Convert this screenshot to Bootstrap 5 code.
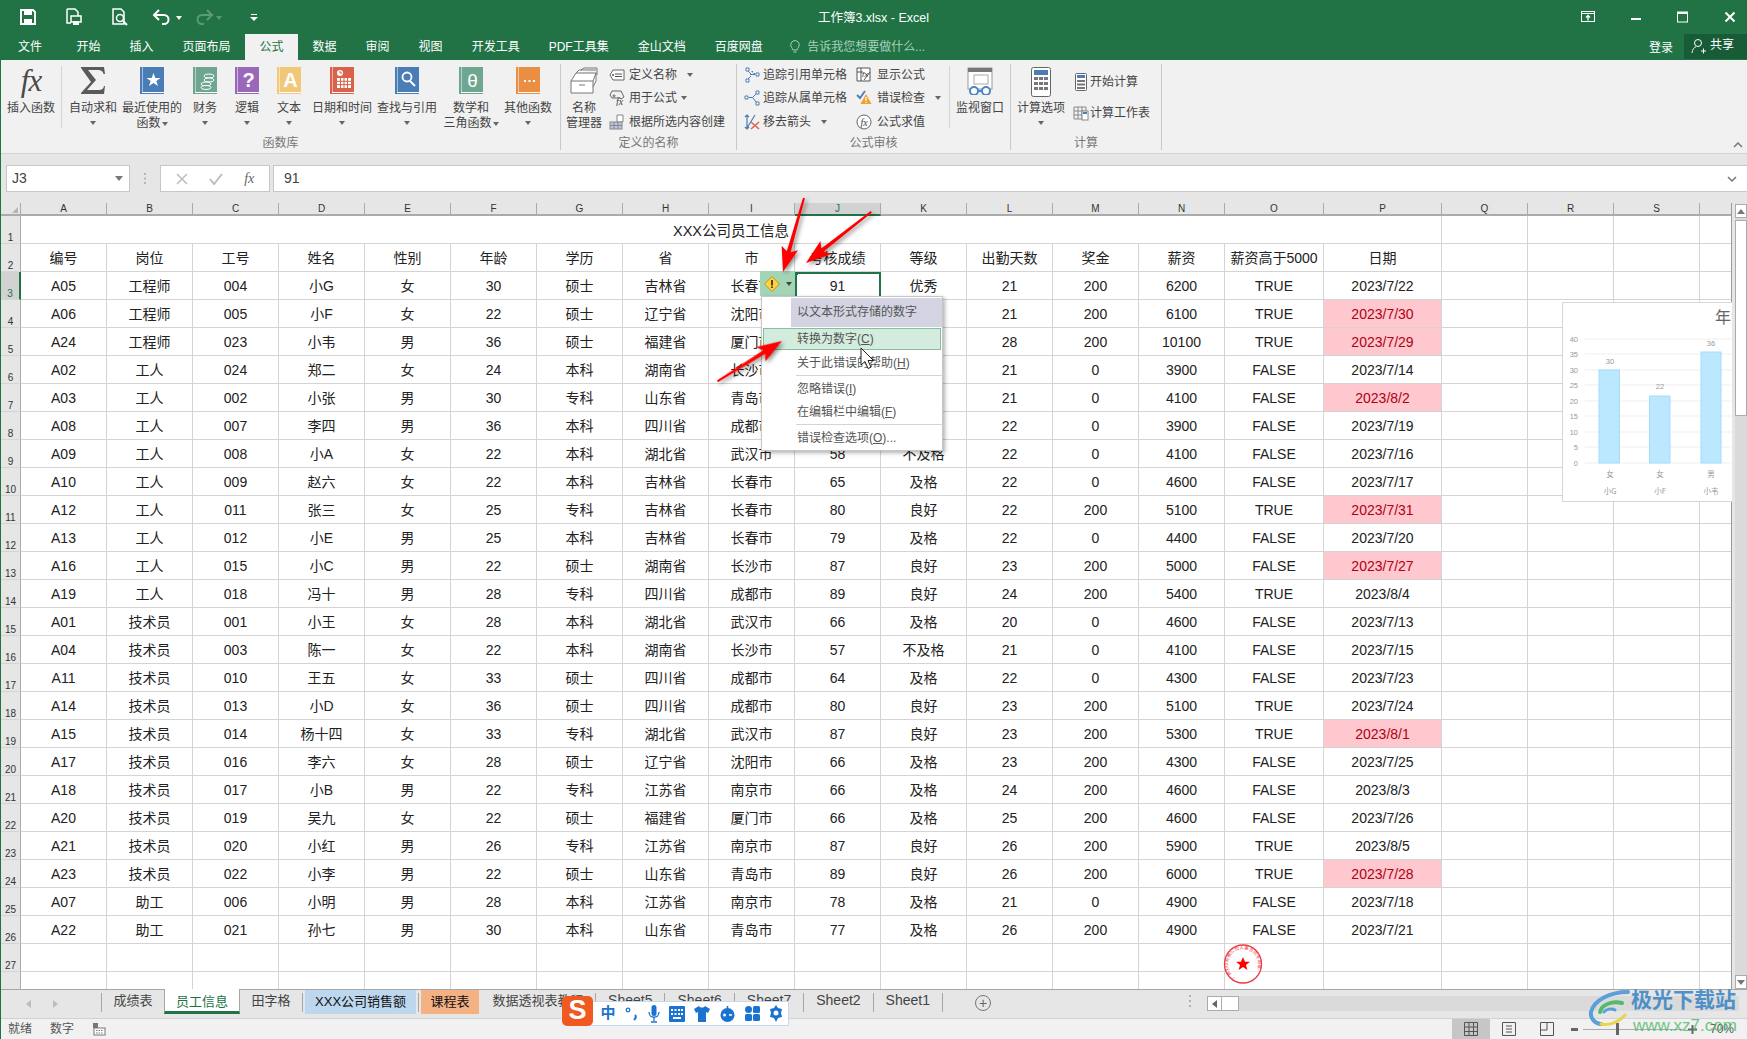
<!DOCTYPE html>
<html lang="zh-CN">
<head>
<meta charset="UTF-8">
<title>工作簿3.xlsx - Excel</title>
<link href="https://cdn.jsdelivr.net/npm/bootstrap@5.3.2/dist/css/bootstrap.min.css" rel="stylesheet">
<style>
    html, body { height: 100%; }
    body {
        width: 1747px; height: 1039px; overflow: hidden; position: relative;
        background: #e6e6e6; color: #444; border-left: 1px solid #217346;
        font-family: "Liberation Sans", "Noto Sans CJK SC", sans-serif; font-size: 12px;
    }
    svg { display: block; }

    /* title bar + tabs */
    .xl-green { background: #217346; color: #fff; margin-left: -1px; }
    .xl-title { height: 34px; position: relative; }
    .qa { width: 24px; height: 20px; }
    .qa-1 { margin-left: 16px; }
    .qa-gap { margin-left: 22px; }
    .qa-undo { margin-left: 19px; }
    .title-text { position: absolute; left: 0; right: 0; top: 9px; text-align: center; font-size: 12.5px; }
    .win-btns { margin-left: auto; gap: 35px; padding-right: 11px; }
    .xl-tabs { height: 26px; align-items: stretch; padding-left: 3px; }
    .xl-tabs .nav-link { color: #fff; padding: 6px 14.5px 0; font-size: 12px; line-height: 14px; }
    .xl-tabs .nav-link.first { padding: 6px 20px 0 15px; }
    .xl-tabs .nav-link.active { background: #f1f1f1; color: #217346; }
    .tell { color: #a9cfb9; gap: 7px; margin-left: 13px; padding-top: 6px; line-height: 14px; }
    .login { margin-left: auto; padding: 5px 11px 0 0; }
    .share { width: 63px; background: #185c37; gap: 3px; margin-bottom: 1px; padding-left: 7px; padding-top: 4px; line-height: 14px; }

    /* ribbon */
    .xl-ribbon { height: 94px; background: #f1f1f1; border-bottom: 1px solid #d2d2d2; padding-top: 4px; position: relative; }
    .rb-group { height: 86px; border-right: 1px solid #c9c9c9; position: relative; flex: none; }
    .rb-items { height: 72px; align-items: flex-start; }
    .rb-label { text-align: center; color: #777; line-height: 14px; height: 14px; }
    .rb-btn { display: flex; flex-direction: column; align-items: center; line-height: 15px; white-space: nowrap; color: #444; padding-top: 3px; }
    .rb-ic { height: 29px; margin-bottom: 5px; display: flex; align-items: flex-start; justify-content: center; }
    .rb-sep { width: 1px; height: 62px; background: #d5d5d5; margin-top: 2px; }
    .fx-big { font: italic 31px/28px "Liberation Serif", serif; color: #4a4a4a; letter-spacing: -1px; }
    .cr { display: inline-block; border: 3px solid transparent; border-top: 4px solid #666; border-bottom: 0; vertical-align: middle; margin-left: 1px; }
    .cr-only { display: block; margin: 5px auto 0; }
    .rb-small { display: flex; flex-direction: column; margin-top: -1px; }
    .rb-row { display: flex; align-items: center; height: 23.5px; white-space: nowrap; }
    .rb-row .ico { flex: none; display: flex; justify-content: center; }
    .cr-gap { margin-left: 10px; }
    .w-60 { width: 60px; } .w-58 { width: 58px; } .w-48 { width: 48px; } .w-36 { width: 36px; } .w-72 { width: 72px; } .w-56 { width: 56px; } .w-40 { width: 40px; }
    .ms-3px { margin-left: 3px; }
    .rb-collapse { position: absolute; right: 4px; bottom: 5px; }
    .grp-a { width: 560px; } .grp-b { width: 176px; } .grp-c { width: 274px; } .grp-d { width: 151px; }

    /* formula bar */
    .xl-fbar { height: 38px; padding-top: 11px; background: #e6e6e6; margin-right: 0; }
    .fb-box { height: 27px; background: #fff; border: 1px solid #c6c6c6; display: flex; align-items: center; }
    .fb-name { width: 124px; margin-left: 5px; padding: 0 6px 0 5px; justify-content: space-between; font-size: 14px; }
    .fb-dots { width: 30px; display: flex; align-items: center; justify-content: center; color: #aaa; }
    .fb-fx { width: 110px; justify-content: space-around; padding: 0 4px; color: #b9b9b9; }
    .fb-fx i { font: italic 14px "Liberation Serif", serif; color: #666; }
    .fb-in { margin-left: 3px; flex: 1; padding: 0 10px; font-size: 14px; justify-content: space-between; border-right: 0; }

    /* sheet */
    .xl-sheet-wrap { height: 797px; padding-top: 11px; overflow: hidden; position: relative; background: #e6e6e6; }
    .xl-grid { width: 1731px; overflow: hidden; height: 786px; border-right: 1px solid #9a9a9a; background: #fff; }
    table.xl-sheet { table-layout: fixed; border-collapse: separate; border-spacing: 0; width: 1730px; margin: 0; background: #fff; color: #222; font-size: 14px; }
    .xl-sheet th, .xl-sheet td { padding: 2px 0 0; text-align: center; vertical-align: middle; height: 28px; line-height: 25px; border: 0; border-right: 1px solid #d4d4d4; border-bottom: 1px solid #d4d4d4; white-space: nowrap; overflow: hidden; font-weight: 400; }
    .xl-sheet thead th { padding: 0; height: 13px; line-height: 11px; font-size: 10px; background: #e6e6e6; color: #333; border-right: 1px solid #ababab; border-bottom: 2px solid #ababab; }
    .xl-sheet thead th.cur { background: #d2d2d2; border-bottom: 2px solid #217346; color: #217346; }
    .xl-sheet th.rh { padding: 0; background: #e6e6e6; font-size: 10px; line-height: 10px; vertical-align: bottom; color: #333; border-right: 1px solid #ababab; border-bottom: 1px solid #d4d4d4; }
    .xl-sheet th.rh.cur { background: #d2d2d2; border-right: 2px solid #217346; color: #217346; }
    .xl-sheet td.hot { background: #ffc7ce; color: #b00012; }
    .xl-sheet td.sel { outline: 2px solid #217346; outline-offset: -2px; background: linear-gradient(135deg, #217346 4px, transparent 4px); }
    .xl-sheet td.ttl { font-size: 14.5px; padding-top: 4px; line-height: 23px; }
    .corner { border-left: 6px solid transparent; border-bottom: 6px solid #b5b5b5; width: 0; height: 0; margin: 2px 2px 0 auto; }
    .vbar { position: absolute; left: 1734px; top: 12px; width: 12px; height: 785px; background: #dadada; }
    .vbar .up, .vbar .dn { height: 14px; background: #fff; border: 1px solid #ababab; display: flex; justify-content: center; align-items: center; }
    .vbar .dn { position: absolute; left: 0; right: 0; bottom: 0; }
    .vbar .th { height: 196px; background: #fff; border: 1px solid #ababab; margin-top: 2px; }
    .tri-up { border: 4px solid transparent; border-bottom: 5px solid #777; border-top: 0; }
    .tri-dn { border: 4px solid transparent; border-top: 5px solid #777; border-bottom: 0; }

    /* sheet tabs */
    .xl-tabbar { height: 29px; background: #e6e6e6; border-top: 1px solid #a6a6a6; }
    .tb-nav { width: 100px; color: #bbb; padding-left: 25px; gap: 22px; }
    .tb { height: 24px; line-height: 23px; padding: 0 11.5px; font-size: 13px; color: #444; position: relative; white-space: nowrap; margin-top: -1px; }
    .tb-sep { border-left: 1px solid #a6a6a6; height: 19px; margin-top: 3px; }
    .tb.on { background: #fff; color: #217346; border-left: 1px solid #a6a6a6; border-right: 1px solid #a6a6a6; border-bottom: 3px solid #217346; padding: 1px 11px 0; height: 25px; }
    .tb.blue { background: #bdd7ee; color: #111; padding: 0 10px; margin: 0 2px; }
    .tb.orange { background: #f4b183; color: #111; padding: 0 9.5px; margin: 0 2px; }
    .tb.sh { font-size: 14px; padding: 0 12px; }
    .tb-add { width: 16px; height: 16px; border: 1px solid #777; border-radius: 50%; color: #666; margin-left: 32px; margin-top: 5px; display: flex; align-items: center; justify-content: center; font-size: 14px; line-height: 1; }
    .tb-hs { margin-left: auto; margin-right: 8px; height: 15px; margin-top: 6px; width: 532px; background: #dadada; }
    .tb-hs .bt { width: 15px; background: #fff; border: 1px solid #ababab; color: #666; display: flex; align-items: center; justify-content: center; }
    .tb-hs .th { width: 17px; background: #fff; border: 1px solid #ababab; border-left: 0; }
    .tb-dots { color: #aaa; position: absolute; left: 1188px; top: 5px; }
    .tri-l { border: 4px solid transparent; border-right: 5px solid #bdbdbd; border-left: 0; }
    .bt .tri-l { border-right-color: #666; }

    /* status bar */
    .xl-status { height: 21px; background: #f1f1f1; border-top: 1px solid #d2d2d2; margin-right: 0; color: #555; }
    .st-txt { padding-left: 7px; gap: 18px; line-height: 20px; }
    .st-views { margin-left: auto; height: 20px; }
    .st-v { width: 38px; display: flex; align-items: center; justify-content: center; }
    .st-v.on { background: #c6c6c6; }
    .st-zoom { width: 181px; position: relative; padding-left: 5px; gap: 5px; }
    .st-track { width: 100px; height: 1px; background: #aaa; position: relative; }
    .st-knob { position: absolute; left: 33px; top: -6px; width: 3px; height: 12px; background: #666; }
    .st-pct { margin-left: auto; padding-right: 13px; }

    /* floating things */
    .float-chart { position: absolute; left: 1561px; top: 302px; width: 170px; height: 200px; background: #fff; border: 1px solid #d6d6d6; border-right: 0; overflow: hidden; }
    .smart-tag { position: absolute; left: 759px; top: 271px; width: 35px; height: 25px; background: #a2d5b6; display: flex; align-items: center; gap: 6px; padding-left: 4px; }
    .smart-menu { position: absolute; left: 760px; top: 296px; width: 182px; height: 155px; background: #fff; border: 1px solid #c6c6c6; border-radius: 0; padding: 0; box-shadow: 2px 2px 4px rgba(0,0,0,.3); display: block; font-size: 12px; min-width: 0; }
    .smart-menu .dropdown-header { margin: 1px 0 0 29px; height: 29px; background: #d3d3e2; padding: 0 6px; line-height: 29px; color: #555; font-size: 12px; }
    .smart-menu .dropdown-item { height: 22px; line-height: 21px; padding: 0 0 0 33px; color: #555; font-size: 12px; border: 1px solid transparent; margin: 0 1px; width: auto; }
    .smart-menu .dropdown-item.on { background: #d3ecdd; border-color: #86bf9f; margin-top: 1px; margin-bottom: 2px; }
    .smart-menu .dropdown-item.lower { margin-top: 1px; }
    .smart-menu u { text-underline-offset: 1px; }
    .smart-menu hr { margin: 1px 0 2px 34px; border-color: #d4d4d4; opacity: 1; }
    .ov-svg { position: absolute; left: 0; top: 0; width: 1747px; height: 1039px; pointer-events: none; z-index: 1050; }
    .arrows { filter: drop-shadow(2px 2px 2px rgba(0,0,0,.45)); }
    .ime { position: absolute; left: 573px; top: 1001px; width: 215px; height: 25px; background: #fff; border: 1px solid #c5d9f1; padding-left: 21px; display: flex; align-items: center; justify-content: space-around; color: #1a73d1; font-size: 15px; font-weight: 700; z-index: 1051; }
    .ime-logo { position: absolute; left: 561px; top: 996px; width: 31px; height: 30px; background: #f05a22; border-radius: 5px; color: #fff; font: 700 27px/28px "Liberation Sans", sans-serif; text-align: center; z-index: 1052; }
    .wm-a { position: absolute; left: 1630px; top: 984px; font: 700 21px/28px "Noto Sans CJK SC", sans-serif; color: #2f7fc4; opacity: .82; white-space: nowrap; }
    .wm-b { position: absolute; left: 1632px; top: 1016px; font: 400 17px/20px "Liberation Sans", sans-serif; color: #4fb96c; opacity: .8; white-space: nowrap; }
    .c-blue { color: #4a7db5; } .c-green { color: #6fa691; } .c-purple { color: #9a68b8; }
    .c-yellow { color: #f0c878; } .c-red { color: #d9634a; } .c-orange { color: #e88f44; }
    .ic-25 { width: 25px; } .ic-22 { width: 22px; } .ic-26 { width: 26px; } .ic-19 { width: 19px; }
    .ms-1px { margin-left: 1px; }
    .calc-row { height: 31px; }
    .calc-row:first-child { margin-top: 3px; }
    .tri-flip { transform: scaleX(-1); }
    .tri-sm { border-width: 3px; border-top-width: 4px; border-top-color: #444; }
</style>
</head>
<body>

<svg width="0" height="0" class="position-absolute">
    <symbol id="book" viewBox="0 0 24 28">
        <rect x="1" y="0" width="23" height="25" fill="currentColor"/>
        <rect x="0" y="0" width="2" height="27" fill="currentColor"/>
        <rect x="2" y="25" width="22" height="1" fill="#fff"/>
        <rect x="2" y="26" width="22" height="1" fill="currentColor"/>
        <rect x="2" y="0" width="1" height="25" fill="#fff" opacity=".5"/>
    </symbol>
</svg>

<div class="xl-green">
    <div class="xl-title d-flex align-items-center">
        <svg class="qa qa-1" viewBox="0 0 24 20"><path d="M5 3h12l2 2v12H5z" fill="none" stroke="#fff" stroke-width="2"/><rect x="8" y="3" width="8" height="5" fill="#fff"/><rect x="8" y="12" width="8" height="5" fill="#fff"/></svg>
        <svg class="qa qa-gap" viewBox="0 0 24 20"><path d="M5 2h8l3 3v4M5 2v14h4" fill="none" stroke="#fff" stroke-width="1.5"/><rect x="9" y="9" width="10" height="6" fill="none" stroke="#fff" stroke-width="1.5"/><rect x="11" y="14" width="6" height="4" fill="#fff"/></svg>
        <svg class="qa qa-gap" viewBox="0 0 24 20"><path d="M5 2h8l3 3v12H5z" fill="none" stroke="#fff" stroke-width="1.5"/><circle cx="12" cy="11" r="3.5" fill="none" stroke="#fff" stroke-width="1.5"/><path d="M15 14l4 4" stroke="#fff" stroke-width="2"/></svg>
        <svg class="qa qa-undo" viewBox="0 0 24 20"><path d="M8 3L3 8l5 5M3 8h10a4 4 0 0 1 0 9h-2" fill="none" stroke="#fff" stroke-width="2"/></svg>
        <svg width="8" height="20" viewBox="0 0 8 20"><path d="M1 9h6l-3 4z" fill="#fff"/></svg>
        <svg class="qa ms-2" viewBox="0 0 24 20"><path d="M16 3l5 5-5 5M21 8H11a4 4 0 0 0 0 9h2" fill="none" stroke="#5b9a78" stroke-width="2"/></svg>
        <svg width="8" height="20" viewBox="0 0 8 20"><path d="M1 9h6l-3 4z" fill="#5b9a78"/></svg>
        <svg class="ms-4" width="14" height="20" viewBox="0 0 14 20"><path d="M4 7h6v1H4zM3 10h8l-4 4z" fill="#fff"/></svg>
        <div class="title-text">工作簿3.xlsx - Excel</div>
        <div class="win-btns d-flex align-items-center">
            <svg width="14" height="12" viewBox="0 0 14 12"><rect x=".5" y=".5" width="13" height="10" fill="none" stroke="#fff"/><path d="M1 2.5h12" stroke="#fff"/><path d="M7 9.5V5M5 6.5L7 4.500l2 2" fill="none" stroke="#fff" stroke-width="1.3"/></svg>
            <svg width="12" height="12" viewBox="0 0 12 12"><path d="M1 8h10" stroke="#fff" stroke-width="2"/></svg>
            <svg width="12" height="12" viewBox="0 0 12 12"><rect x=".5" y="1" width="10" height="10" fill="none" stroke="#fff"/><path d="M1 2h10" stroke="#fff" stroke-width="2"/></svg>
            <svg width="12" height="12" viewBox="0 0 12 12"><path d="M1.500 1.500l9 9M10.500 1.500l-9 9" stroke="#fff" stroke-width="2"/></svg>
        </div>
    </div>
    <nav class="nav xl-tabs">
        <a class="nav-link first">文件</a>
        <a class="nav-link">开始</a>
        <a class="nav-link">插入</a>
        <a class="nav-link">页面布局</a>
        <a class="nav-link active">公式</a>
        <a class="nav-link">数据</a>
        <a class="nav-link">审阅</a>
        <a class="nav-link">视图</a>
        <a class="nav-link">开发工具</a>
        <a class="nav-link">PDF工具集</a>
        <a class="nav-link">金山文档</a>
        <a class="nav-link">百度网盘</a>
        <div class="tell d-flex">
            <svg width="10" height="14" viewBox="0 0 10 14"><path d="M3 10C2 7.500.8 7 .8 4.800a4.200 4.200 0 0 1 8.400 0C9.200 7 8 7.500 7 10zM3.500 12h3" fill="none" stroke="#a9cfb9"/></svg>
            <span>告诉我您想要做什么...</span>
        </div>
        <div class="login">登录</div>
        <div class="share d-flex">
            <svg width="16" height="16" viewBox="0 0 16 16"><circle cx="7" cy="5" r="3.500" fill="none" stroke="#fff"/><path d="M1 15c.5-4 2.500-6 4-6M10 13h5M12.500 10.500v5" fill="none" stroke="#fff"/></svg>
            <span>共享</span>
        </div>
    </nav>
</div>

<div class="xl-ribbon d-flex">
    <!-- 函数库 -->
    <div class="rb-group grp-a d-flex flex-column">
        <div class="rb-items d-flex">
            <div class="rb-btn w-60"><div class="rb-ic fx-big">fx</div>插入函数</div>
            <div class="rb-sep"></div>
            <div class="rb-btn w-60 ms-1px">
                <div class="rb-ic"><svg width="24" height="27" viewBox="0 0 24 27"><path d="M0 0h23l1 7h-1.500C22 4 20 3 17 3H7l8 10-9 10h12c3 0 4.500-1.500 5-4h1l-1 8H0v-1l10-11L0 1z" fill="#5a5a5a"/></svg></div>
                自动求和<span class="cr cr-only"></span>
            </div>
            <div class="rb-btn w-58">
                <div class="rb-ic"><svg class="c-blue" width="24" height="28"><use href="#book"/><polygon points="13.500,6 15.300,11 20.500,11 16.300,14 18,19 13.500,16 9,19 10.700,14 6.500,11 11.700,11" fill="#fff"/></svg></div>
                最近使用的<span>函数<span class="cr"></span></span>
            </div>
            <div class="rb-btn w-48">
                <div class="rb-ic"><svg class="c-green" width="24" height="28"><use href="#book"/><g fill="#6fa691" stroke="#fff"><ellipse cx="16" cy="9" rx="5" ry="2"/><ellipse cx="16" cy="13" rx="5" ry="2"/><ellipse cx="13" cy="17" rx="5" ry="2"/><ellipse cx="13" cy="20.500" rx="5" ry="2"/></g></svg></div>
                财务<span class="cr cr-only"></span>
            </div>
            <div class="rb-btn w-36">
                <div class="rb-ic"><svg class="c-purple" width="24" height="28"><use href="#book"/><text x="13.500" y="20" text-anchor="middle" font-size="20" font-weight="700" fill="#fff" font-family="Liberation Sans">?</text></svg></div>
                逻辑<span class="cr cr-only"></span>
            </div>
            <div class="rb-btn w-48">
                <div class="rb-ic"><svg class="c-yellow" width="24" height="28"><use href="#book"/><text x="13.500" y="20" text-anchor="middle" font-size="20" font-weight="700" fill="#fff" font-family="Liberation Sans">A</text></svg></div>
                文本<span class="cr cr-only"></span>
            </div>
            <div class="rb-btn w-58">
                <div class="rb-ic"><svg class="c-red" width="24" height="28"><use href="#book"/><circle cx="10" cy="6" r="3" fill="#fff"/><path d="M10 4v2h2" stroke="#d9634a" fill="none"/><path d="M7 11h14v10H7z" fill="#fff"/><path d="M7 14.300h14M7 17.600h14M10.500 11v10M14 11v10M17.500 11v10" stroke="#d9634a"/></svg></div>
                日期和时间<span class="cr cr-only"></span>
            </div>
            <div class="rb-btn w-72">
                <div class="rb-ic"><svg class="c-blue" width="24" height="28"><use href="#book"/><circle cx="12" cy="10" r="4.500" fill="none" stroke="#fff" stroke-width="1.800"/><path d="M15 14l5 5" stroke="#fff" stroke-width="2"/></svg></div>
                查找与引用<span class="cr cr-only"></span>
            </div>
            <div class="rb-btn w-56">
                <div class="rb-ic"><svg class="c-green" width="24" height="28"><use href="#book"/><text x="13.500" y="20" text-anchor="middle" font-size="19" fill="#fff" font-family="Liberation Sans">θ</text></svg></div>
                数学和<span>三角函数<span class="cr"></span></span>
            </div>
            <div class="rb-btn w-58">
                <div class="rb-ic"><svg class="c-orange" width="24" height="28"><use href="#book"/><path d="M8 13h2v2H8zM12.500 13h2v2h-2zM17 13h2v2h-2z" fill="#fff"/></svg></div>
                其他函数<span class="cr cr-only"></span>
            </div>
        </div>
        <div class="rb-label">函数库</div>
    </div>
    <!-- 定义的名称 -->
    <div class="rb-group grp-b d-flex flex-column">
        <div class="rb-items d-flex">
            <div class="rb-btn w-40 ms-3px">
                <div class="rb-ic"><svg width="28" height="28" viewBox="0 0 28 28" fill="none" stroke="#777"><path d="M1 14h22v12H1zM1 14l5-8h20l-3 8M6 6l3-3h17M26 6v8l-3 6M9 18h6" fill="#fff"/><path d="M11 3l3-2h13v7" /></svg></div>
                名称<span>管理器</span>
            </div>
            <div class="rb-small">
                <div class="rb-row"><span class="ico ic-25"><svg width="16" height="12" viewBox="0 0 16 12"><path d="M4 1h11v10H4L1 6z" fill="#fff" stroke="#666"/><path d="M6 5h7M6 7.500h7" stroke="#555"/><circle cx="4" cy="6" r="1" fill="#555"/></svg></span>定义名称<span class="cr cr-gap"></span></div>
                <div class="rb-row"><span class="ico ic-25"><svg width="16" height="16" viewBox="0 0 16 16" fill="none" stroke="#666"><path d="M3 1h9l3 6-3 2-1-1H3L1 5zM5 5a1 1 0 1 0 .1 0"/><text x="7" y="15" font-size="10" font-style="italic" fill="#444" stroke="none" font-family="Liberation Serif">fx</text></svg></span>用于公式<span class="cr ms-1"></span></div>
                <div class="rb-row"><span class="ico ic-25"><svg width="16" height="16" viewBox="0 0 16 16"><path d="M8 1h6v7H8z" fill="#fff" stroke="#888"/><rect x="1" y="8" width="12" height="7" fill="#b9c7db" stroke="#888"/><path d="M1 11.500h12M5 8v7M9 8v7" stroke="#888"/></svg></span>根据所选内容创建</div>
            </div>
        </div>
        <div class="rb-label">定义的名称</div>
    </div>
    <!-- 公式审核 -->
    <div class="rb-group grp-c d-flex flex-column">
        <div class="rb-items d-flex">
            <div class="rb-small ps-1">
                <div class="rb-row"><span class="ico ic-22"><svg width="16" height="16" viewBox="0 0 16 16"><path d="M2 1h3v3H2zM2 12h3v3H2zM12 6h3v3h-3z" fill="#fff" stroke="#4a7db5"/><path d="M4 4l3 3M4 12l3-3M6 7.500h5" stroke="#4a7db5"/><path d="M7 4h2v2h2v2" fill="#4a7db5"/></svg></span>追踪引用单元格</div>
                <div class="rb-row"><span class="ico ic-22"><svg width="16" height="16" viewBox="0 0 16 16"><path d="M1 6h3v3H1zM12 1h3v3h-3zM12 12h3v3h-3z" fill="#fff" stroke="#4a7db5"/><path d="M5 7.500h4M9 7l3-3M9 8l3 4" stroke="#4a7db5"/></svg></span>追踪从属单元格</div>
                <div class="rb-row"><span class="ico ic-22"><svg width="16" height="16" viewBox="0 0 16 16"><path d="M3 1v14M11 1L3 14M1 3l2-2 2 2M1 13l2 2 2-2" fill="none" stroke="#4a7db5" stroke-width="1.200"/><path d="M7 8l8 7M15 8l-8 7" stroke="#d9634a" stroke-width="1.500"/></svg></span>移去箭头<span class="cr cr-gap"></span></div>
            </div>
            <div class="rb-small ms-1">
                <div class="rb-row"><span class="ico ic-26"><svg width="16" height="16" viewBox="0 0 16 16" fill="none" stroke="#555"><path d="M1 1h13v13H1z" fill="#fff"/><path d="M1 5h6M5 1v13M8 13l6-8"/><text x="6" y="10" font-size="8" fill="#444" stroke="none" font-family="Liberation Sans" font-style="italic">fx</text></svg></span>显示公式</div>
                <div class="rb-row"><span class="ico ic-26"><svg width="16" height="16" viewBox="0 0 16 16"><path d="M1 5l3 3 5-7" fill="none" stroke="#4a7db5" stroke-width="1.800"/><path d="M10 4l5.500 10h-11z" fill="#f0a030"/><path d="M10 7v4M10 12v1" stroke="#fff" stroke-width="1.300"/></svg></span>错误检查<span class="cr cr-gap"></span></div>
                <div class="rb-row"><span class="ico ic-26"><svg width="16" height="16" viewBox="0 0 16 16"><circle cx="8" cy="8" r="7" fill="#fff" stroke="#666"/><text x="8" y="11.500" text-anchor="middle" font-size="10" font-style="italic" fill="#444" font-family="Liberation Serif">fx</text></svg></span>公式求值</div>
            </div>
            <div class="rb-sep ms-auto"></div>
            <div class="rb-btn w-60">
                <div class="rb-ic"><svg width="28" height="28" viewBox="0 0 28 28"><rect x="2" y="1" width="24" height="21" fill="#fff" stroke="#999"/><rect x="2" y="1" width="24" height="4" fill="#777"/><rect x="8" y="8" width="14" height="9" fill="none" stroke="#aaa"/><circle cx="8" cy="24" r="4" fill="#fff" stroke="#4a86c5" stroke-width="2"/><circle cx="20" cy="24" r="4" fill="#fff" stroke="#4a86c5" stroke-width="2"/><path d="M12 24h4" stroke="#4a86c5" stroke-width="2"/></svg></div>
                监视窗口
            </div>
        </div>
        <div class="rb-label">公式审核</div>
    </div>
    <!-- 计算 -->
    <div class="rb-group grp-d d-flex flex-column">
        <div class="rb-items d-flex">
            <div class="rb-btn w-60">
                <div class="rb-ic"><svg width="20" height="30" viewBox="0 0 20 30"><rect x=".5" y=".5" width="19" height="29" rx="2" fill="#fff" stroke="#666"/><rect x="3" y="3" width="14" height="5" fill="#4a7db5"/><g fill="#777"><path d="M3 10h4v3H3zM8 10h4v3H8zM13 10h4v3h-4zM3 15h4v3H3zM8 15h4v3H8zM13 15h4v3h-4zM3 20h4v3H3zM8 20h4v3H8zM13 20h4v3h-4z"/></g></svg></div>
                计算选项<span class="cr cr-only"></span>
            </div>
            <div class="rb-small">
                <div class="rb-row calc-row"><span class="ico ic-19"><svg width="12" height="18" viewBox="0 0 12 18"><rect x=".5" y=".5" width="11" height="17" rx="1" fill="#fff" stroke="#666"/><rect x="2" y="2" width="8" height="3" fill="#4a7db5"/><path d="M2 7h8v2H2zM2 10.500h8v2H2zM2 14h8v2H2z" fill="#777"/></svg></span>开始计算</div>
                <div class="rb-row calc-row"><span class="ico ic-19"><svg width="16" height="16" viewBox="0 0 16 16" fill="none" stroke="#888"><path d="M1 2h12v12H1zM1 6h12M1 10h12M5 2v12M9 2v12"/><rect x="9" y="6" width="6" height="9" fill="#fff"/><rect x="10" y="7" width="4" height="2" fill="#4a7db5" stroke="none"/></svg></span>计算工作表</div>
            </div>
        </div>
        <div class="rb-label">计算</div>
    </div>
    <svg class="rb-collapse" width="10" height="6" viewBox="0 0 10 6"><path d="M1 5l4-4 4 4" fill="none" stroke="#777" stroke-width="1.500"/></svg>
</div>

<div class="xl-fbar d-flex">
    <div class="fb-box fb-name"><span>J3</span><span class="tri-dn"></span></div>
    <div class="fb-dots">
        <svg width="3" height="11" viewBox="0 0 3 11"><path d="M0 0h2v2H0zM0 4.500h2v2H0zM0 9h2v2H0z" fill="#b5b5b5"/></svg>
    </div>
    <div class="fb-box fb-fx">
        <svg width="12" height="12" viewBox="0 0 12 12"><path d="M1 1l10 10M11 1L1 11" stroke="#bdbdbd" stroke-width="1.500"/></svg>
        <svg width="14" height="12" viewBox="0 0 14 12"><path d="M1 6l4 5 8-10" fill="none" stroke="#bdbdbd" stroke-width="2"/></svg>
        <i>fx</i>
    </div>
    <div class="fb-box fb-in">
        <span>91</span>
        <svg width="10" height="6" viewBox="0 0 10 6"><path d="M1 1l4 4 4-4" fill="none" stroke="#777" stroke-width="1.500"/></svg>
    </div>
</div>

<div class="xl-sheet-wrap">
    <div class="xl-grid">
        <table class="table xl-sheet" id="sheet"></table>
    </div>
    <div class="vbar">
        <div class="up"><span class="tri-up"></span></div>
        <div class="th"></div>
        <div class="dn"><span class="tri-dn"></span></div>
    </div>
</div>

<div class="xl-tabbar d-flex position-relative">
    <div class="tb-nav d-flex align-items-center">
        <span class="tri-l"></span><span class="tri-l tri-flip"></span>
    </div>
    <div class="tb-sep"></div>
    <div class="tb">成绩表</div>
    <div class="tb on">员工信息</div>
    <div class="tb">田字格</div>
    <div class="tb-sep"></div>
    <div class="tb blue">XXX公司销售额</div>
    <div class="tb-sep"></div>
    <div class="tb orange">课程表</div>
    <div class="tb">数据透视表教程</div>
    <div class="tb-sep"></div>
    <div class="tb sh">Sheet5</div>
    <div class="tb-sep"></div>
    <div class="tb sh">Sheet6</div>
    <div class="tb-sep"></div>
    <div class="tb sh">Sheet7</div>
    <div class="tb-sep"></div>
    <div class="tb sh">Sheet2</div>
    <div class="tb-sep"></div>
    <div class="tb sh">Sheet1</div>
    <div class="tb-sep"></div>
    <div class="tb-add">+</div>
    <svg class="tb-dots" width="3" height="13" viewBox="0 0 3 13"><path d="M0 0h2v2H0zM0 5h2v2H0zM0 10h2v2H0z" fill="#b0b0b0"/></svg>
    <div class="tb-hs d-flex">
        <div class="bt"><span class="tri-l"></span></div>
        <div class="th"></div>
    </div>
</div>

<div class="xl-status d-flex">
    <div class="st-txt d-flex">
        <span>就绪</span><span>数字</span>
        <svg class="align-self-center" width="14" height="14" viewBox="0 0 14 14"><rect x="1" y="1" width="5" height="5" fill="#777"/><rect x="2" y="6" width="11" height="7" fill="#fff" stroke="#777"/><path d="M4 8.500h7M4 11h7" stroke="#777" stroke-dasharray="1.500 1"/></svg>
    </div>
    <div class="st-views d-flex">
        <div class="st-v on"><svg width="14" height="14" viewBox="0 0 14 14" fill="none" stroke="#555"><path d="M.5.500h13v13H.5zM.5 5h13M.5 9.500h13M5 .5v13M9.500.5v13"/></svg></div>
        <div class="st-v"><svg width="14" height="14" viewBox="0 0 14 14" fill="none" stroke="#555"><path d="M.5.500h13v13H.5zM4 4h6M4 7h6M4 10h6"/></svg></div>
        <div class="st-v"><svg width="14" height="14" viewBox="0 0 14 14" fill="none" stroke="#555"><path d="M.5.500h13v13H.5zM.5 8h6.500V.5"/></svg></div>
    </div>
    <div class="st-zoom d-flex align-items-center">
        <svg width="7" height="3" viewBox="0 0 7 3"><path d="M0 0h7v3H0z" fill="#666"/></svg>
        <div class="st-track"><div class="st-knob"></div></div>
        <svg width="9" height="9" viewBox="0 0 9 9"><path d="M3.500 0h2v9h-2zM0 3.500h9v2H0z" fill="#666"/></svg>
        <span class="st-pct">70%</span>
    </div>
</div>

<!-- chart floating over the grid -->
<div class="float-chart">
    <svg width="170" height="200" viewBox="1562 303 170 200">
        <g stroke="#efefef">
            <path d="M1584 339h150M1584 354h150M1584 370h150M1584 385h150M1584 401h150M1584 416h150M1584 432h150M1584 447h150M1584 463h150"/>
        </g>
        <g fill="#bbe8fe" stroke="#a5dcfb">
            <rect x="1598" y="370" width="20.500" height="93"/>
            <rect x="1648.500" y="396" width="20.500" height="67"/>
            <rect x="1700" y="352" width="20" height="111"/>
        </g>
        <g fill="#999" font-size="7.500" font-family="Liberation Sans">
            <text x="1577" y="342" text-anchor="end">40</text>
            <text x="1577" y="357" text-anchor="end">35</text>
            <text x="1577" y="373" text-anchor="end">30</text>
            <text x="1577" y="388" text-anchor="end">25</text>
            <text x="1577" y="404" text-anchor="end">20</text>
            <text x="1577" y="419" text-anchor="end">15</text>
            <text x="1577" y="435" text-anchor="end">10</text>
            <text x="1577" y="450" text-anchor="end">5</text>
            <text x="1577" y="466" text-anchor="end">0</text>
            <text x="1609" y="364" text-anchor="middle">30</text>
            <text x="1659" y="389" text-anchor="middle">22</text>
            <text x="1710" y="346" text-anchor="middle">36</text>
        </g>
        <g fill="#999" font-size="7.500" font-family="Noto Sans CJK SC" text-anchor="middle">
            <text x="1609" y="477">女</text><text x="1659" y="477">女</text><text x="1710" y="477">男</text>
            <text x="1609" y="494">小G</text><text x="1659" y="494">小F</text><text x="1710" y="494">小韦</text>
        </g>
        <text x="1714" y="323" font-size="16" fill="#666" font-family="Noto Sans CJK SC">年龄</text>
    </svg>
</div>

<!-- error smart tag and its menu -->
<div class="smart-tag">
    <svg width="16" height="16" viewBox="0 0 16 16"><path d="M8 .5L15.500 8 8 15.500.5 8z" fill="#ffd23c" stroke="#c8951a"/><path d="M8 4v5.500M8 10.500v1.500" stroke="#222" stroke-width="1.600"/></svg>
    <span class="tri-dn tri-sm"></span>
</div>
<div class="dropdown-menu smart-menu">
    <div class="dropdown-header">以文本形式存储的数字</div>
    <a class="dropdown-item on">转换为数字(<u>C</u>)</a>
    <a class="dropdown-item">关于此错误的帮助(<u>H</u>)</a>
    <hr>
    <a class="dropdown-item">忽略错误(<u>I</u>)</a>
    <a class="dropdown-item lower">在编辑栏中编辑(<u>F</u>)</a>
    <hr>
    <a class="dropdown-item">错误检查选项(<u>O</u>)...</a>
</div>

<!-- annotations: arrows, cursor, stamp, watermark -->
<svg class="ov-svg" viewBox="0 0 1747 1039">
    <path d="M860 348v17l4-3.500 3 7 3-1.300-3-6.700h5.500z" fill="#fff" stroke="#222"/>
    <g class="arrows" fill="#f00">
        <polygon transform="translate(782 272) rotate(105.800)" points="0,0 -25,-8.500 -21,-2 -77,-1 -77,1 -21,2 -25,8.500"/>
        <polygon transform="translate(805 263) rotate(141.900)" points="0,0 -25,-8.500 -21,-2 -83,-1 -83,1 -21,2 -25,8.500"/>
        <polygon transform="translate(781 341) rotate(-32)" points="0,0 -25,-8.500 -21,-2 -76,-1 -76,1 -21,2 -25,8.500"/>
    </g>
    <g transform="translate(1242 964)">
        <defs><path id="stampArc" d="M-8 13a15 15 0 1 1 16 0"/></defs>
        <ellipse rx="18.500" ry="19" fill="#fff" fill-opacity=".6" stroke="#ee3a45" stroke-width="1.300"/>
        <text font-size="4.500" fill="#ee3a45" font-family="Noto Sans CJK SC"><textPath href="#stampArc">广州XXX有限公司人事合同专用章</textPath></text>
        <polygon points="0,-7 2,-2.200 7,-2.200 3,1 4.400,6 0,3 -4.400,6 -3,1 -7,-2.200 -2,-2.200" fill="#f00"/>
    </g>
    <g transform="translate(1589 990)" fill="none" stroke-linecap="round">
        <path d="M38 2C20 2 4 10 1 22c-1 6 4 12 10 12" stroke="#5a9fd8" stroke-width="4"/>
        <path d="M10 22c2-8 12-11 22-9" stroke="#53b96f" stroke-width="4"/>
        <path d="M11 34c8 2 18-2 24-9" stroke="#e8d44d" stroke-width="3"/>
        <path d="M14 22c2-3 8-4 11-2" stroke="#5a9fd8" stroke-width="3"/>
    </g>
</svg>

<div class="ime">
    <span>中</span>
    <svg width="14" height="16" viewBox="0 0 14 16"><circle cx="3" cy="4" r="1.800" fill="none" stroke="#1a73d1" stroke-width="1.300"/><path d="M10 9c1 1 1 3-1 5" fill="none" stroke="#1a73d1" stroke-width="2"/></svg>
    <svg width="12" height="18" viewBox="0 0 12 18"><rect x="3.500" y="0" width="5" height="11" rx="2.500" fill="#1a73d1"/><path d="M1 7c0 7 10 7 10 0M6 12v4M3 17h6" fill="none" stroke="#1a73d1" stroke-width="1.300"/></svg>
    <svg width="16" height="16" viewBox="0 0 16 16"><rect width="16" height="16" rx="1" fill="#1a73d1"/><path d="M2 3h2v2H2zM5.500 3h2v2h-2zM9 3h2v2H9zM12 3h2v2h-2zM2 7h2v2H2zM5.500 7h2v2h-2zM9 7h2v2H9zM12 7h2v2h-2zM4 11h8v2H4z" fill="#fff"/></svg>
    <svg width="16" height="16" viewBox="0 0 16 16"><path d="M5 0L0 3l2 4 2-1v10h8V6l2 1 2-4-5-3c-1 2-5 2-6 0z" fill="#1a73d1"/></svg>
    <svg width="17" height="16" viewBox="0 0 17 16"><circle cx="8.500" cy="9" r="7" fill="#1a73d1"/><path d="M8.500 0v3" stroke="#1a73d1" stroke-width="1.500"/><circle cx="5.500" cy="9" r="1.500" fill="#fff"/><path d="M10 8.200h3v1.500h-3z" fill="#fff"/></svg>
    <svg width="15" height="15" viewBox="0 0 15 15"><g fill="#1a73d1"><circle cx="3.500" cy="3.500" r="3.500"/><rect x="8" width="7" height="7" rx="1.500"/><rect y="8" width="7" height="7" rx="1.500"/><rect x="8" y="8" width="7" height="7" rx="1.500"/></g></svg>
    <svg width="14" height="17" viewBox="0 0 14 17"><path d="M7 0l2 3 4 1-1 4 1 4-4 1-2 4-2-4-4-1 1-4-1-4 4-1z" fill="#1a73d1"/><circle cx="7" cy="8" r="2.500" fill="#fff"/></svg>
</div>
<div class="ime-logo">S</div>
<div class="wm-a">极光下载站</div>
<div class="wm-b">www.xz7.com</div>

<script>
    var cols = "ABCDEFGHIJKLMNOPQRST".split("");
    var widths = {O: 99, P: 118};
    var head = ["编号","岗位","工号","姓名","性别","年龄","学历","省","市","考核成绩","等级","出勤天数","奖金","薪资","薪资高于5000","日期"];
    // "_" marks a cell that the error menu hides in the picture
    var rows = [
        "A05 工程师 004 小G 女 30 硕士 吉林省 长春市 91 优秀 21 200 6200 TRUE 2023/7/22",
        "A06 工程师 005 小F 女 22 硕士 辽宁省 沈阳市 _ _ 21 200 6100 TRUE 2023/7/30",
        "A24 工程师 023 小韦 男 36 硕士 福建省 厦门市 _ _ 28 200 10100 TRUE 2023/7/29",
        "A02 工人 024 郑二 女 24 本科 湖南省 长沙市 _ _ 21 0 3900 FALSE 2023/7/14",
        "A03 工人 002 小张 男 30 专科 山东省 青岛市 _ _ 21 0 4100 FALSE 2023/8/2",
        "A08 工人 007 李四 男 36 本科 四川省 成都市 _ _ 22 0 3900 FALSE 2023/7/19",
        "A09 工人 008 小A 女 22 本科 湖北省 武汉市 58 不及格 22 0 4100 FALSE 2023/7/16",
        "A10 工人 009 赵六 女 22 本科 吉林省 长春市 65 及格 22 0 4600 FALSE 2023/7/17",
        "A12 工人 011 张三 女 25 专科 吉林省 长春市 80 良好 22 200 5100 TRUE 2023/7/31",
        "A13 工人 012 小E 男 25 本科 吉林省 长春市 79 及格 22 0 4400 FALSE 2023/7/20",
        "A16 工人 015 小C 男 22 硕士 湖南省 长沙市 87 良好 23 200 5000 FALSE 2023/7/27",
        "A19 工人 018 冯十 男 28 专科 四川省 成都市 89 良好 24 200 5400 TRUE 2023/8/4",
        "A01 技术员 001 小王 女 28 本科 湖北省 武汉市 66 及格 20 0 4600 FALSE 2023/7/13",
        "A04 技术员 003 陈一 女 22 本科 湖南省 长沙市 57 不及格 21 0 4100 FALSE 2023/7/15",
        "A11 技术员 010 王五 女 33 硕士 四川省 成都市 64 及格 22 0 4300 FALSE 2023/7/23",
        "A14 技术员 013 小D 女 36 硕士 四川省 成都市 80 良好 23 200 5100 TRUE 2023/7/24",
        "A15 技术员 014 杨十四 女 33 专科 湖北省 武汉市 87 良好 23 200 5300 TRUE 2023/8/1",
        "A17 技术员 016 李六 女 28 硕士 辽宁省 沈阳市 66 及格 23 200 4300 FALSE 2023/7/25",
        "A18 技术员 017 小B 男 22 专科 江苏省 南京市 66 及格 24 200 4600 FALSE 2023/8/3",
        "A20 技术员 019 吴九 女 22 硕士 福建省 厦门市 66 及格 25 200 4600 FALSE 2023/7/26",
        "A21 技术员 020 小红 男 26 专科 江苏省 南京市 87 良好 26 200 5900 TRUE 2023/8/5",
        "A23 技术员 022 小李 男 22 硕士 山东省 青岛市 89 良好 26 200 6000 TRUE 2023/7/28",
        "A07 助工 006 小明 男 28 本科 江苏省 南京市 78 及格 21 0 4900 FALSE 2023/7/18",
        "A22 助工 021 孙七 男 30 本科 山东省 青岛市 77 及格 26 200 4900 FALSE 2023/7/21"
    ];
    var hot = ["2023/7/30","2023/7/29","2023/8/2","2023/7/31","2023/7/27","2023/8/1","2023/7/28"];

    var html = '<colgroup><col style="width:20px">';
    cols.forEach(function (c) { html += '<col style="width:' + (widths[c] || 86) + 'px">'; });
    html += '</colgroup><thead><tr><th><div class="corner"></div></th>';
    cols.forEach(function (c) { html += '<th' + (c == "J" ? ' class="cur"' : '') + '>' + c + '</th>'; });
    html += '</tr></thead><tbody>';

    // blank cells for the columns past P
    var tail = '<td></td><td></td><td></td><td></td>';
    html += '<tr><th class="rh">1</th><td class="ttl" colspan="16">XXX公司员工信息</td>' + tail + '</tr>';
    html += '<tr><th class="rh">2</th>' + head.map(function (h) { return '<td>' + h + '</td>'; }).join("") + tail + '</tr>';
    rows.forEach(function (r, i) {
        var n = i + 3;
        html += '<tr><th class="rh' + (n == 3 ? ' cur' : '') + '">' + n + '</th>';
        r.split(" ").forEach(function (v, k) {
            var cls = (k == 9 && n == 3) ? ' class="sel"' : (k == 15 && hot.indexOf(v) >= 0 ? ' class="hot"' : '');
            html += '<td' + cls + '>' + (v == "_" ? "" : v) + '</td>';
        });
        html += tail + '</tr>';
    });
    for (var n = 27; n <= 28; n++) {
        html += '<tr><th class="rh">' + n + '</th>' + '<td></td>'.repeat(20) + '</tr>';
    }
    html += '</tbody>';
    document.getElementById("sheet").innerHTML = html;
</script>
<script src="https://cdn.jsdelivr.net/npm/bootstrap@5.3.2/dist/js/bootstrap.bundle.min.js"></script>
</body>
</html>
